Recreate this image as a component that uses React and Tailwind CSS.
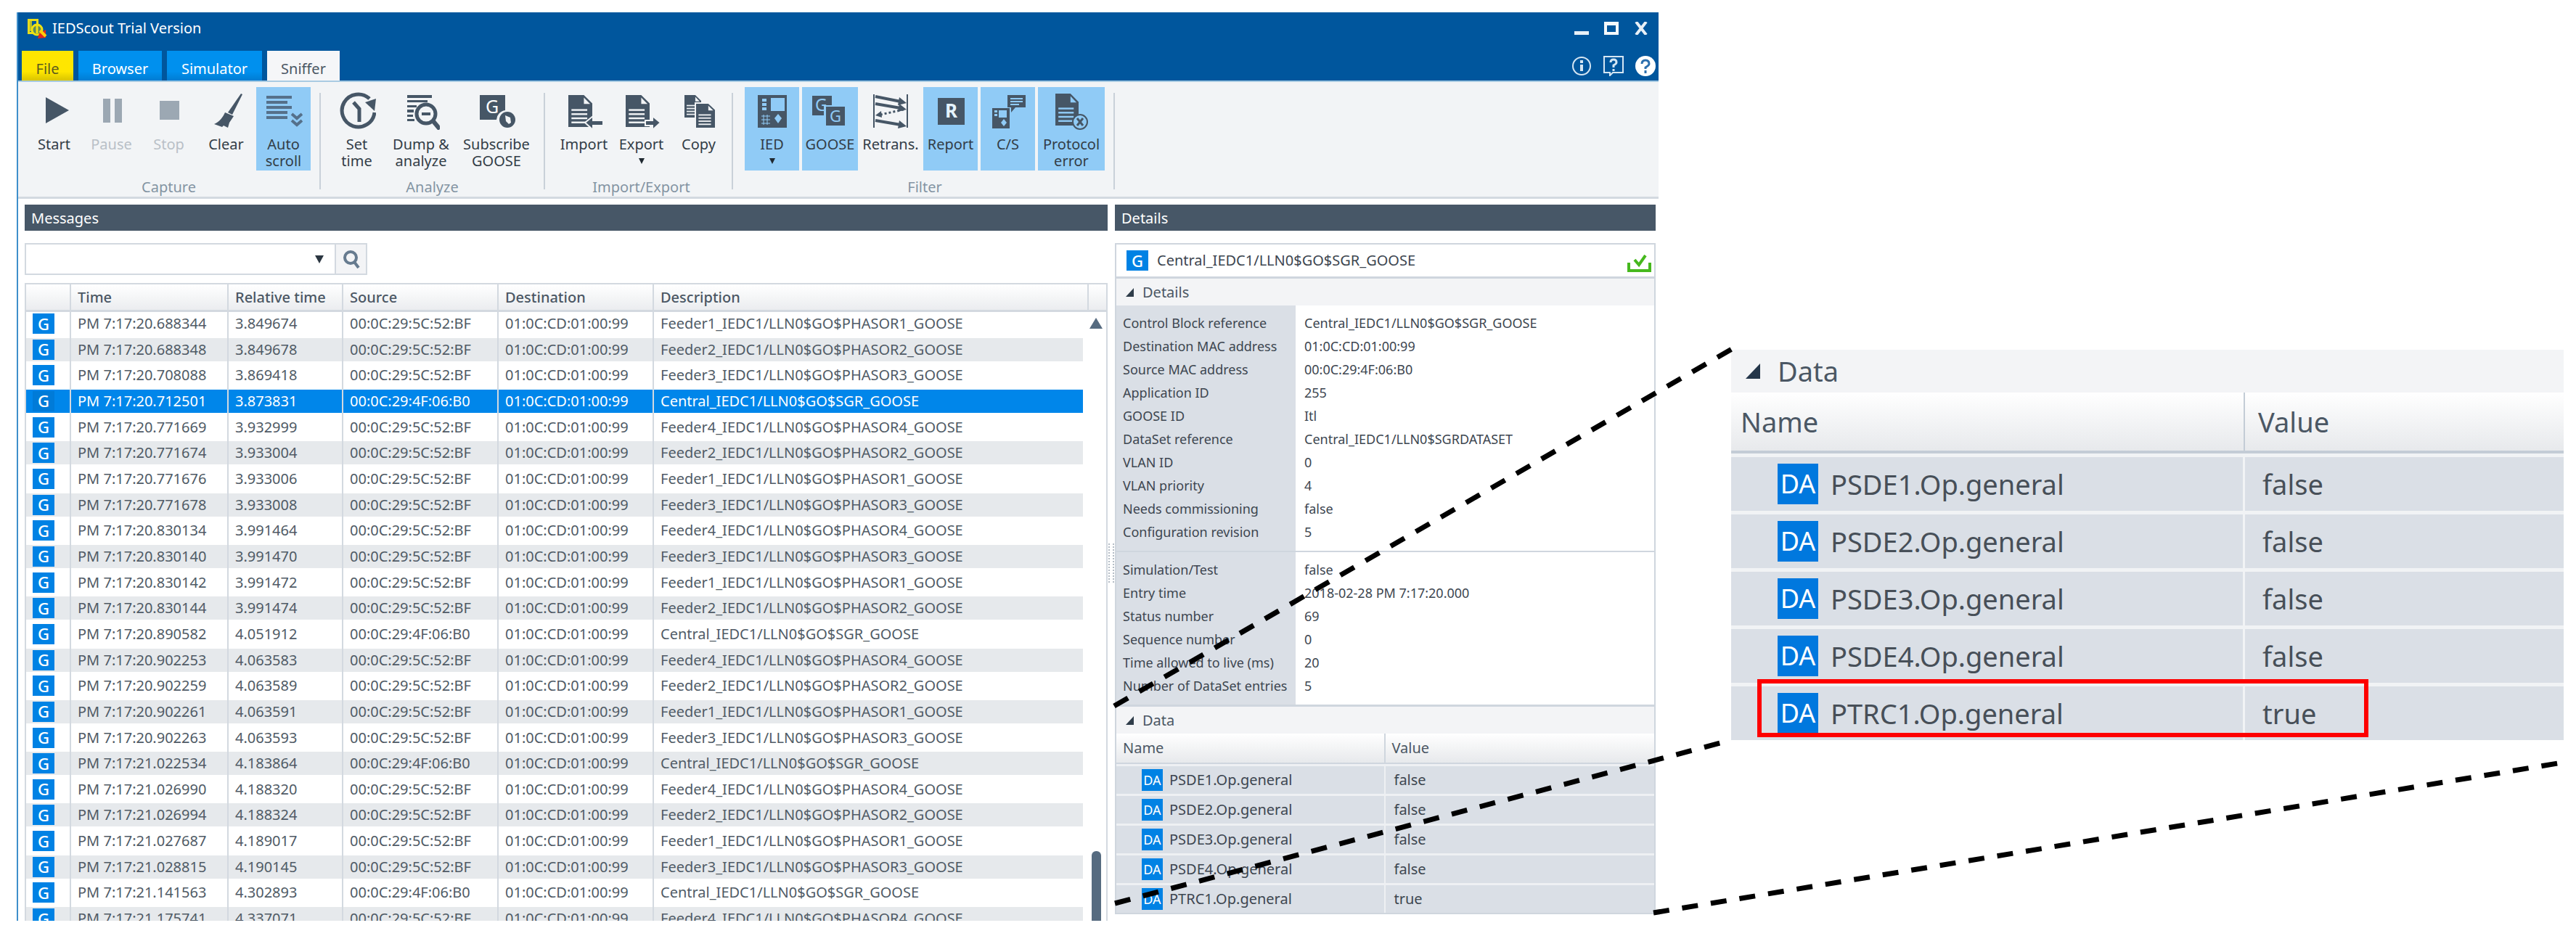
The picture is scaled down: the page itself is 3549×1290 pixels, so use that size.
import { useState } from 'react';
import clsx from 'clsx';

const FEEDER_MAC = '00:0C:29:5C:52:BF';
const CENTRAL_MAC = '00:0C:29:4F:06:B0';
const DESTINATION = '01:0C:CD:01:00:99';

// [time, relative time, feeder number], 0 is the central IED
const messages = [
  ['7:17:20.688344', '3.849674', 1],
  ['7:17:20.688348', '3.849678', 2],
  ['7:17:20.708088', '3.869418', 3],
  ['7:17:20.712501', '3.873831', 0],
  ['7:17:20.771669', '3.932999', 4],
  ['7:17:20.771674', '3.933004', 2],
  ['7:17:20.771676', '3.933006', 1],
  ['7:17:20.771678', '3.933008', 3],
  ['7:17:20.830134', '3.991464', 4],
  ['7:17:20.830140', '3.991470', 3],
  ['7:17:20.830142', '3.991472', 1],
  ['7:17:20.830144', '3.991474', 2],
  ['7:17:20.890582', '4.051912', 0],
  ['7:17:20.902253', '4.063583', 4],
  ['7:17:20.902259', '4.063589', 2],
  ['7:17:20.902261', '4.063591', 1],
  ['7:17:20.902263', '4.063593', 3],
  ['7:17:21.022534', '4.183864', 0],
  ['7:17:21.026990', '4.188320', 4],
  ['7:17:21.026994', '4.188324', 2],
  ['7:17:21.027687', '4.189017', 1],
  ['7:17:21.028815', '4.190145', 3],
  ['7:17:21.141563', '4.302893', 0],
  ['7:17:21.175741', '4.337071', 4],
];

const controlBlock = [
  ['Control Block reference', 'Central_IEDC1/LLN0$GO$SGR_GOOSE'],
  ['Destination MAC address', DESTINATION],
  ['Source MAC address', CENTRAL_MAC],
  ['Application ID', '255'],
  ['GOOSE ID', 'Itl'],
  ['DataSet reference', 'Central_IEDC1/LLN0$SGRDATASET'],
  ['VLAN ID', '0'],
  ['VLAN priority', '4'],
  ['Needs commissioning', 'false'],
  ['Configuration revision', '5'],
];

const messageInfo = [
  ['Simulation/Test', 'false'],
  ['Entry time', '2018-02-28 PM 7:17:20.000'],
  ['Status number', '69'],
  ['Sequence number', '0'],
  ['Time allowed to live (ms)', '20'],
  ['Number of DataSet entries', '5'],
];

const dataSet = [
  ['PSDE1.Op.general', 'false'],
  ['PSDE2.Op.general', 'false'],
  ['PSDE3.Op.general', 'false'],
  ['PSDE4.Op.general', 'false'],
  ['PTRC1.Op.general', 'true'],
];

const describe = (feeder) =>
  feeder === 0
    ? 'Central_IEDC1/LLN0$GO$SGR_GOOSE'
    : `Feeder${feeder}_IEDC1/LLN0$GO$PHASOR${feeder}_GOOSE`;

/* ---------- icons ---------- */

const Glyph = ({ children }) => (
  <svg viewBox="0 0 52 52" className="h-[52px] w-[52px] shrink-0" fill="currentColor" aria-hidden="true">
    {children}
  </svg>
);

// Filled page with a folded corner and text lines
const Page = ({ x = 4, y = 4, w = 33, h = 44, lines = '#f2f4f6' }) => (
  <>
    <path d={`M${x} ${y}h${w * 0.65}l${w * 0.35} ${h * 0.26}v${h * 0.74}h${-w}z`} />
    <path d={`M${x + w * 0.65} ${y + h * 0.08}v${h * 0.2}h${w * 0.26}z`} fill={lines} />
    {[0.44, 0.57, 0.7, 0.83].map((f) => (
      <rect key={f} x={x + w * 0.13} y={y + h * f} width={w * 0.66} height={h * 0.055} fill={lines} />
    ))}
  </>
);

const icons = {
  start: <path d="M14 7L46 25L14 43z" />,
  pause: <path d="M14 9h10v33h-10zM30 9h10v33h-10z" />,
  stop: <path d="M13 12h27v26h-27z" />,
  clear: (
    <>
      <path d="M46 2L48 3L34 31L28 28z" />
      <path d="M24 28L36 33L30 42L28 49L22 46L20 48L9 44C16 41 21 35 24 28z" />
    </>
  ),
  autoScroll: (
    <g fill="#55708a" stroke="#55708a">
      <path d="M2 7h35M2 14h29M2 21h35M2 28h29M2 35h29" strokeWidth="4" />
      <path d="M37 30l7 6l7 -6M37 39l7 6l7 -6" fill="none" strokeWidth="4" />
    </g>
  ),
  setTime: (
    <>
      <path d="M43 9A22.500 22.500 0 1 0 50 28" fill="none" stroke="currentColor" strokeWidth="5" />
      <path d="M52 9L50 26L37 14z" />
      <path d="M21 14L29 23V41" fill="none" stroke="currentColor" strokeWidth="5" />
    </>
  ),
  dump: (
    <>
      <path d="M7 4h34v4h-34zM7 11h28v3h-28zM7 18h13v3h-13zM7 24h9v4h-9zM7 31h8v3h-8zM7 37h10v3h-10z" />
      <circle cx="33" cy="30" r="13" fill="none" stroke="currentColor" strokeWidth="5" />
      <path d="M27 28h12v4h-12z" />
      <path d="M42 39L52 51" stroke="currentColor" strokeWidth="6" />
    </>
  ),
  subscribe: (
    <>
      <path d="M3 4h35v21a14 14 0 0 0 -12 13h-23z" />
      <text x="11" y="29" fontSize="25" fill="#fff">G</text>
      <circle cx="41" cy="38" r="11" />
      <path d="M38 32l7 3l1 7l-3 2l-4 -4z" fill="#f2f4f6" />
    </>
  ),
  import: (
    <>
      <Page />
      <path d="M27 42l11 -9v6h14v7h-14v6z" stroke="#f2f4f6" strokeWidth="2" />
    </>
  ),
  export: (
    <>
      <Page />
      <path d="M52 42l-11 -9v6h-10v7h10v6z" stroke="#f2f4f6" strokeWidth="2" />
    </>
  ),
  copy: (
    <>
      <Page x={6} y={4} w={23} h={31} />
      <path d="M20 14h18l12 14v22h-30z" fill="#f2f4f6" />
      <Page x={22} y={16} w={26} h={33} />
    </>
  ),
  ied: (
    <>
      <path d="M6 4h40v45h-40z" />
      <path d="M24 8h19v18h-19zM12 9h6v4h-6zM12 15h6v4h-6zM12 21h6v4h-6z" fill="#90cbf6" />
      <path d="M34 30l5 6l-5 7l-5 -7z" fill="#90cbf6" />
      <path d="M11 33h12M11 38h12M11 43h12M14 31v14M19 31v14" stroke="#90cbf6" strokeWidth="1" />
    </>
  ),
  goose: (
    <>
      <path d="M1 5h27v13h-11v14h-16z" />
      <text x="5" y="26" fontSize="23" fill="#90cbf6">G</text>
      <path d="M19 19h28v28h-28z" stroke="#90cbf6" strokeWidth="2" />
      <text x="25" y="41" fontSize="22" fill="#90cbf6">G</text>
    </>
  ),
  retrans: (
    <g stroke="currentColor" fill="none">
      <path d="M3 3v46M49 3v46" strokeWidth="2" />
      <path d="M5 6L40 13M5 16L40 22M5 39L40 45" strokeWidth="4" />
      <path d="M44 24L12 31" strokeWidth="3" strokeDasharray="3 3" />
      <path d="M38 7l10 8l-12 3zM38 16l10 8l-12 3zM38 39l10 8l-12 3zM13 26l-8 6l9 3z" fill="currentColor" stroke="none" />
    </g>
  ),
  report: (
    <>
      <path d="M8 8h37v37h-37z" />
      <text x="18" y="35" fontSize="26" fontWeight="700" fill="#e6f4fe">R</text>
    </>
  ),
  cs: (
    <>
      <path d="M25 4h25v17h-14l-6 7v-7h-5z" />
      <path d="M29 9h17M29 13h17M29 17h12" stroke="#90cbf6" strokeWidth="2" />
      <path d="M4 22h24v28h-24z" />
      <path d="M13 25h11v10h-11zM7 25h4v3h-4zM7 30h4v3h-4z" fill="#90cbf6" />
      <path d="M20 37l4 5l-4 5l-4 -5z" fill="#90cbf6" />
    </>
  ),
  protocol: (
    <>
      <Page y={2} w={32} h={44} lines="#90cbf6" />
      <circle cx="38" cy="41" r="10" fill="#90cbf6" stroke="currentColor" strokeWidth="2" />
      <path d="M34 36l8 10M42 36l-8 10" stroke="currentColor" strokeWidth="3" />
    </>
  ),
};

const ribbon = [
  {
    title: 'Capture',
    pad: 'pl-3 pr-3',
    items: [
      { icon: 'start', label: 'Start', width: 'w-[75px]' },
      { icon: 'pause', label: 'Pause', width: 'w-[75px]', disabled: true },
      { icon: 'stop', label: 'Stop', width: 'w-[75px]', disabled: true },
      { icon: 'clear', label: 'Clear', width: 'w-[75px]' },
      { icon: 'autoScroll', label: 'Auto scroll', width: 'w-[75px]', active: true },
    ],
  },
  {
    title: 'Analyze',
    pad: 'pl-3 pr-3',
    items: [
      { icon: 'setTime', label: 'Set time', width: 'w-[75px]' },
      { icon: 'dump', label: 'Dump & analyze', width: 'w-[94px]' },
      { icon: 'subscribe', label: 'Subscribe GOOSE', width: 'w-[106px]' },
    ],
  },
  {
    title: 'Import/Export',
    pad: 'pl-4 pr-2',
    items: [
      { icon: 'import', label: 'Import', width: 'w-[75px]' },
      { icon: 'export', label: 'Export', width: 'w-[75px]', menu: true },
      { icon: 'copy', label: 'Copy', width: 'w-[75px]' },
    ],
  },
  {
    title: 'Filter',
    pad: 'pl-4 pr-3',
    items: [
      { icon: 'ied', label: 'IED', width: 'w-[75px]', active: true, menu: true },
      { icon: 'goose', label: 'GOOSE', width: 'w-[77px]', active: true },
      { icon: 'retrans', label: 'Retrans.', width: 'w-[82px]' },
      { icon: 'report', label: 'Report', width: 'w-[75px]', active: true },
      { icon: 'cs', label: 'C/S', width: 'w-[75px]', active: true },
      { icon: 'protocol', label: 'Protocol error', width: 'w-[92px]', active: true },
    ],
  },
];

const RibbonButton = ({ item }) => (
  <button
    type="button"
    disabled={item.disabled}
    className={clsx(
      'flex h-[115px] flex-col items-center pt-[7px] text-[20px] leading-[23px]',
      item.width,
      item.active && 'bg-[#90cbf6]',
      item.disabled ? 'text-[#b9c0c7]' : 'text-[#333d47]'
    )}
  >
    <span className={item.disabled ? 'text-[#9ca8b3]' : 'text-[#465666]'}>
      <Glyph>{icons[item.icon]}</Glyph>
    </span>
    <span className="mt-2">{item.label}</span>
    {item.menu && (
      <svg viewBox="0 0 10 8" className="mt-2 h-2 w-[10px]" aria-hidden="true">
        <path d="M1 0h8l-4 8z" fill="#1f2830" />
      </svg>
    )}
  </button>
);

const TitleBar = () => (
  <header className="border-b-2 border-[#a9cbe2] bg-[#00569d] text-white">
    <div className="flex h-11 items-center pr-[14px] pl-3">
      <svg viewBox="0 0 28 30" className="h-[30px] w-7" aria-hidden="true">
        <path d="M1 2h15v8h-3v-5h-9v15h4v3h-7z" fill="#e6dc1e" />
        <path d="M4 5h3v14h-3z" fill="#b5bd2c" />
        <circle cx="14" cy="17" r="7" fill="#5f8a5a" stroke="#f0e211" strokeWidth="3" />
        <path d="M14 11v11" stroke="#f0e211" strokeWidth="3" />
        <path d="M17 22l9 -5v11l-11 1z" fill="#e0261c" />
        <path d="M18 18l8 8" stroke="#ffcf0a" strokeWidth="4" />
      </svg>
      <h1 className="ml-[7px] flex-1 text-[20px]">IEDScout Trial Version</h1>
      <div className="flex items-center gap-5">
        <button type="button" aria-label="Minimize">
          <svg viewBox="0 0 20 18" className="h-[18px] w-5"><path d="M0 13h20v5h-20z" fill="#e8f0f7" /></svg>
        </button>
        <button type="button" aria-label="Maximize">
          <svg viewBox="0 0 22 18" className="h-[18px] w-[22px]">
            <path d="M1 0h20v18h-20zM5 5v9h12v-9z" fill="#f4f8fb" fillRule="evenodd" />
          </svg>
        </button>
        <button type="button" aria-label="Close">
          <svg viewBox="0 0 20 18" className="h-[18px] w-5">
            <path d="M3 0L17 18M17 0L3 18" stroke="#e8f0f7" strokeWidth="4" />
          </svg>
        </button>
      </div>
    </div>
    <div className="mt-[9px] flex h-[41px] items-center pr-1 pl-[5px]">
      <nav className="flex flex-1 gap-[7px] self-stretch text-[20px]">
        <button type="button" className="w-[71px] bg-linear-to-b from-[#ffe600] from-70% to-[#d9c400] pt-2 text-[#5c5a1e]">File</button>
        <button type="button" className="w-[115px] bg-linear-to-b from-[#0090ee] from-70% to-[#007cd2] pt-2">Browser</button>
        <button type="button" className="w-[131px] bg-linear-to-b from-[#0090ee] from-70% to-[#007cd2] pt-2">Simulator</button>
        <button type="button" className="w-[100px] bg-[#f5f6f8] pt-2 text-[#4b5764]">Sniffer</button>
      </nav>
      <div className="flex items-center gap-4">
        <button type="button" aria-label="About">
          <svg viewBox="0 0 28 28" className="h-7 w-7" fill="none" stroke="#d5e6f3" strokeWidth="2">
            <circle cx="14" cy="14" r="12" />
            <path d="M14 6v4M14 12v9" strokeWidth="4" />
          </svg>
        </button>
        <button type="button" aria-label="Feedback">
          <svg viewBox="0 0 28 28" className="h-7 w-7" fill="none" stroke="#d5e6f3" strokeWidth="2">
            <path d="M1 1h26v22h-14l-4 4v-4h-8z" />
            <path d="M10 9q0 -4 4 -4t4 4q0 2 -4 4v3M14 18v3" strokeWidth="3" />
          </svg>
        </button>
        <button type="button" aria-label="Help">
          <svg viewBox="0 0 28 28" className="h-7 w-7" fill="none">
            <circle cx="14" cy="14" r="14" fill="#fff" />
            <path d="M9 11q0 -5 5 -5t5 5q0 2 -5 5v2M14 20v4" stroke="#2c6fae" strokeWidth="3" />
          </svg>
        </button>
      </div>
    </div>
  </header>
);

const Ribbon = () => (
  <div className="flex h-[161px] border-b-3 border-[#d3d9e0] bg-[#f2f4f6] pt-[7px]">
    {ribbon.map((group) => (
      <div key={group.title} className="flex">
        <div className={group.pad}>
          <div className="flex gap-1">
            {group.items.map((item) => (
              <RibbonButton key={item.icon} item={item} />
            ))}
          </div>
          <p className="mt-2 text-center text-[20px] leading-[30px] text-[#8494a3]">{group.title}</p>
        </div>
        <div className="mt-2 h-[133px] w-0.5 bg-[#c9d1d9]" />
      </div>
    ))}
  </div>
);

const GooseBadge = ({ selected }) => (
  <span
    className={clsx(
      'flex h-7 w-[30px] items-center justify-center text-[22px] font-medium text-white',
      selected ? 'bg-[#007bd8]' : 'bg-[#0082e4]'
    )}
  >
    G
  </span>
);

const Messages = () => {
  const [selected, setSelected] = useState(3);
  const [filter, setFilter] = useState('');

  return (
    <section className="min-w-0 flex-1">
      <h2 className="h-9 bg-[#475767] pl-[9px] text-[20px] leading-[38px] text-white">Messages</h2>

      <div className="mt-[17px] flex h-11 w-[472px] border-2 border-[#d3d9e0]">
        <input
          type="text"
          aria-label="Filter messages"
          value={filter}
          onChange={(e) => setFilter(e.target.value)}
          className="min-w-0 flex-1 px-2 text-[20px] outline-none"
        />
        <button type="button" aria-label="Recent filters" className="flex w-[42px] items-center justify-center">
          <svg viewBox="0 0 12 11" className="h-[11px] w-3"><path d="M0 0h12l-6 11z" fill="#2b3641" /></svg>
        </button>
        <button type="button" aria-label="Search" className="flex w-[43px] items-center justify-center border-l-2 border-[#d3d9e0] bg-[#f3f4f6]">
          <svg viewBox="0 0 24 26" className="h-[26px] w-6" fill="none" stroke="#667b8f">
            <circle cx="11" cy="11" r="8" strokeWidth="4" />
            <path d="M16 17L22 25" strokeWidth="4" />
          </svg>
        </button>
      </div>

      <div className="relative mt-[11px] h-[879px] overflow-hidden border-x-2 border-t-2 border-[#d3d9e0]">
        <table className="h-[894px] w-full table-fixed border-separate border-spacing-0 text-left text-[20px] whitespace-nowrap text-[#505b66]">
          <thead>
            <tr className="h-[38px] bg-linear-to-b from-white to-[#e9ebee] text-[#4b5764]">
              <th className="w-[62px] border-r-2 border-b-3 border-[#d3d9e0]" aria-label="Type" />
              <th className="w-[217px] border-r-2 border-b-3 border-[#d3d9e0] pl-[9px] font-medium">Time</th>
              <th className="w-[158px] border-r-2 border-b-3 border-[#d3d9e0] pl-[9px] font-medium">Relative time</th>
              <th className="w-[214px] border-r-2 border-b-3 border-[#d3d9e0] pl-[9px] font-medium">Source</th>
              <th className="w-[214px] border-r-2 border-b-3 border-[#d3d9e0] pl-[9px] font-medium">Destination</th>
              <th className="border-r-2 border-b-3 border-[#d3d9e0] pl-[9px] font-medium">Description</th>
              <th className="w-6 border-b-3 border-[#d3d9e0]" aria-label="Scroll" />
            </tr>
          </thead>
          <tbody>
            {messages.map(([time, relative, feeder], i) => {
              const active = i === selected;
              const cell = clsx(
                'flex h-8 items-center pl-[9px]',
                active ? 'bg-[#0086ea] text-white' : i % 2 === 1 && 'bg-[#e6e9ec]'
              );
              return (
                <tr key={time} className="align-top" onClick={() => setSelected(i)}>
                  <td className="border-r-2 border-[#d3d9e0] p-0">
                    <div className={cell}><GooseBadge selected={active} /></div>
                  </td>
                  <td className="border-r-2 border-[#d3d9e0] p-0"><div className={cell}>PM {time}</div></td>
                  <td className="border-r-2 border-[#d3d9e0] p-0"><div className={cell}>{relative}</div></td>
                  <td className="border-r-2 border-[#d3d9e0] p-0">
                    <div className={cell}>{feeder === 0 ? CENTRAL_MAC : FEEDER_MAC}</div>
                  </td>
                  <td className="border-r-2 border-[#d3d9e0] p-0"><div className={cell}>{DESTINATION}</div></td>
                  <td className="p-0 pr-2"><div className={cell}>{describe(feeder)}</div></td>
                  <td className="p-0" />
                </tr>
              );
            })}
          </tbody>
        </table>
        {/* scroll bar */}
        <div className="absolute top-[46px] right-[5px] bottom-0 flex w-[18px] flex-col items-center justify-between">
          <svg viewBox="0 0 18 15" className="h-[15px] w-[18px]"><path d="M9 0L18 15H0z" fill="#566b80" /></svg>
          <div className="h-24 w-[13px] rounded-t-md bg-[#566b80]" />
        </div>
      </div>
    </section>
  );
};

const PropertyList = ({ items, className }) => (
  <dl className={clsx('grid grid-cols-[247px_1fr] text-[18px] leading-8 text-[#3d4650]', className)}>
    {items.map(([name, value], i) => {
      const edge = clsx(i === 0 && 'pt-2', i === items.length - 1 && 'pb-[10px]');
      return (
        <div key={name} className="contents">
          <dt className={clsx('bg-[#dadfe6] pl-[9px] whitespace-nowrap', edge)}>{name}</dt>
          <dd className={clsx('pl-3', edge)}>{value}</dd>
        </div>
      );
    })}
  </dl>
);

const SectionHeader = ({ children }) => (
  <h3 className="flex h-[37px] items-center bg-[#f3f4f6] pl-[13px] text-[20px] text-[#4b5764]">
    <svg viewBox="0 0 11 12" className="mr-3 h-3 w-[11px]" aria-hidden="true">
      <path d="M11 0V12H0z" fill="#2f3d4a" />
    </svg>
    {children}
  </h3>
);

const Details = () => (
  <section className="w-[745px] shrink-0">
    <h2 className="h-9 bg-[#475767] pl-[9px] text-[20px] leading-[38px] text-white">Details</h2>
    <div className="mt-[17px] border-2 border-[#cfd6de]">
      <div className="flex h-[47px] items-center border-b-3 border-[#cfd6de] pr-1 pl-[14px] text-[20px] text-[#3d4650]">
        <GooseBadge />
        <span className="ml-3 flex-1">Central_IEDC1/LLN0$GO$SGR_GOOSE</span>
        <svg viewBox="0 0 33 24" className="mt-2 h-6 w-[33px]" fill="none" stroke="#46b81e" aria-hidden="true">
          <path d="M2 11v11h29v-11" strokeWidth="4" />
          <path d="M10 7l6 7l9 -13" strokeWidth="4" />
        </svg>
      </div>
      <SectionHeader>Details</SectionHeader>
      <PropertyList items={controlBlock} className="border-b-2 border-[#cfd6de]" />
      <PropertyList items={messageInfo} className="border-b-3 border-[#cfd6de]" />
      <SectionHeader>Data</SectionHeader>
      <table className="w-full table-fixed border-separate border-spacing-0 text-left text-[20px] text-[#3d4650]">
        <thead>
          <tr className="h-[42px] bg-linear-to-b from-white to-[#e6e8eb] text-[#4b5764]">
            <th className="border-r-2 border-b-2 border-[#cfd6de] p-0 pl-[9px] font-normal">Name</th>
            <th className="border-b-2 border-[#cfd6de] p-0 pl-[9px] font-normal">Value</th>
          </tr>
        </thead>
        <tbody>
          {dataSet.map(([name, value]) => (
            <tr key={name} className="h-[41px] bg-[#dadfe6]">
              <td className="border-t-3 border-r-2 border-[#eef0f3] p-0 pl-[35px]">
                <div className="flex items-center gap-[9px]">
                  <span className="flex h-[30px] w-[29px] items-center justify-center bg-[#0082e4] text-[18px] text-white">DA</span>
                  {name}
                </div>
              </td>
              <td className="border-t-3 border-[#eef0f3] p-0 pl-3">{value}</td>
            </tr>
          ))}
        </tbody>
      </table>
    </div>
  </section>
);

// Enlarged copy of the data set table
const Callout = () => (
  <aside className="mt-[465px] self-start text-[38px]">
    <h3 className="flex h-[59px] items-center bg-[#f3f4f6] pl-5 text-[#4b5764]">
      <svg viewBox="0 0 20 21" className="mr-6 h-[21px] w-5" aria-hidden="true">
        <path d="M20 0V21H0z" fill="#24364a" />
      </svg>
      Data
    </h3>
    <div className="relative">
      <table className="w-full table-fixed border-separate border-spacing-0 text-left leading-[50px] text-[#474f58]">
        <thead>
          <tr className="h-[84px] bg-linear-to-b from-white to-[#e6e8eb] text-[#4b5764]">
            <th className="w-[708px] border-r-2 border-b-4 border-[#c3ccd6] p-0 pl-[13px] font-normal">Name</th>
            <th className="border-b-4 border-[#c3ccd6] p-0 pl-[18px] font-normal">Value</th>
          </tr>
        </thead>
        <tbody>
          {dataSet.map(([name, value]) => (
            <tr key={name} className="h-[79px] bg-[#dadfe6]">
              <td className="border-t-5 border-r-3 border-[#f1f3f5] p-0 pl-16">
                <div className="flex items-center gap-[17px]">
                  <span className="flex h-[56px] w-[56px] items-center justify-center bg-[#0078de] text-[36px] text-white">DA</span>
                  {name}
                </div>
              </td>
              <td className="border-t-5 border-[#f1f3f5] p-0 pl-6">{value}</td>
            </tr>
          ))}
        </tbody>
      </table>
      <div className="absolute bottom-1 left-9 h-20 w-[842px] border-6 border-[#fe0000]" />
    </div>
  </aside>
);

export default function App() {
  return (
    <div className="relative grid grid-cols-[2262fr_1147fr] gap-[100px] bg-white pt-[17px] pr-[17px] pb-[21px] pl-[23px] font-['Noto_Sans',sans-serif]">
      <main className="min-w-0 border-l-2 border-[#3f8fcb]">
        <TitleBar />
        <Ribbon />
        <div className="flex pt-2 pr-1 pl-[9px]">
          <Messages />
          <div className="flex w-[10px] items-center justify-center">
            <div className="h-[54px] w-2 border-x-2 border-dotted border-[#b4bcc5]" />
          </div>
          <Details />
        </div>
      </main>
      <Callout />
      <svg
        viewBox="0 0 3549 1290"
        preserveAspectRatio="none"
        className="pointer-events-none absolute inset-0 h-full w-full"
        fill="none"
        stroke="#000"
        strokeWidth="7"
        strokeDasharray="22 18"
        aria-hidden="true"
      >
        <path d="M1535 973L2386 481" />
        <path d="M1536 1245L2385 1020" />
        <path d="M2278 1258L3530 1051" />
      </svg>
    </div>
  );
}
